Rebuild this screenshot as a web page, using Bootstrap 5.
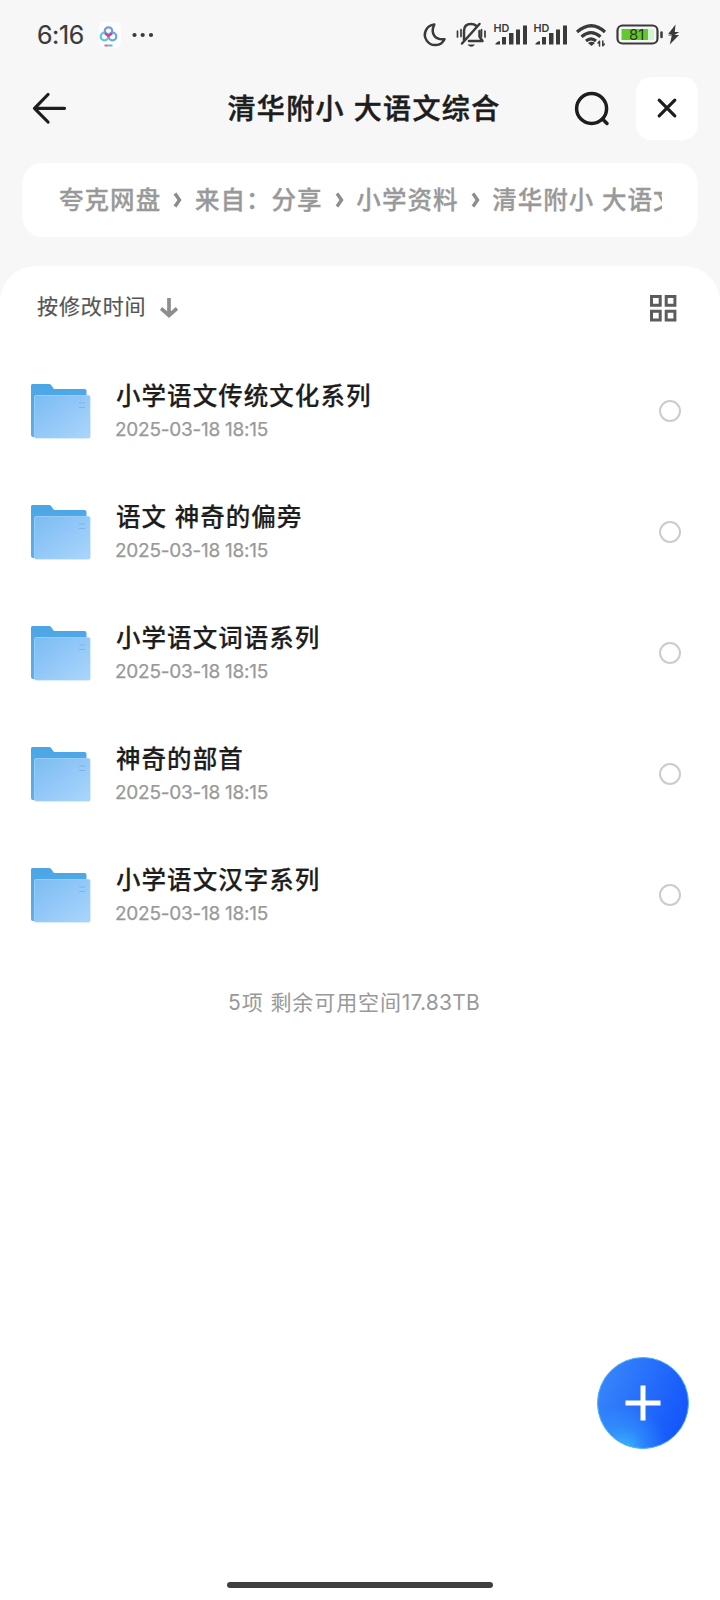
<!DOCTYPE html>
<html lang="zh-CN">
<head>
<meta charset="utf-8">
<meta name="viewport" content="width=device-width, initial-scale=1">
<title>清华附小 大语文综合</title>
<link href="https://cdn.jsdelivr.net/npm/bootstrap@5.3.0/dist/css/bootstrap.min.css" rel="stylesheet">
<style>
body{font-family:Inter,"Noto Sans CJK SC",sans-serif;background:#f7f7f7;color:#1d1d1d}
.screen{width:720px;height:1600px}
svg{display:block;flex:none}
.statusbar{height:70px;padding-left:37px}
.clock{font-size:25px;line-height:30px;color:#3a3a3a;width:46px;letter-spacing:-.4px;-webkit-text-stroke:.2px}
.titlebar{height:78px}
.page-name{font-size:28px;font-weight:500;letter-spacing:1.35px;line-height:40px;padding-left:86px;-webkit-text-stroke:.5px}
.close-btn{width:62px;height:63px;border-radius:15px;margin:-2px 22px 0 0}
.crumbs{height:74px;margin:15px 22px 0;padding:0 36px 0 37px;border-radius:21px}
.crumb-line{font-size:24.5px;font-weight:500;letter-spacing:1.05px;color:#999;line-height:36px;-webkit-text-stroke:.3px}
.sheet{margin-top:29px;border-radius:36px 36px 0 0}
.sortbar{height:84px;padding:0 43px 0 37px}
.sort-label{font-size:21px;letter-spacing:.9px;color:#555;line-height:32px;margin-top:-2px;-webkit-text-stroke:.2px}
.sort-arrow{margin-left:13px}
.entry{height:121px;padding:0 39px 0 28px}
.entry svg{margin-top:3px}
.entry-name{font-size:24.5px;font-weight:500;letter-spacing:1.05px;line-height:34px;margin-bottom:5px;-webkit-text-stroke:.2px}
.entry-date{font-size:19px;letter-spacing:-.25px;line-height:24px;color:#999;margin-left:-1px;-webkit-text-stroke:.25px}
.pick{width:22px;height:22px;border:2px solid #ccc;border-radius:50%}
.summary{font-size:21px;letter-spacing:.9px;color:#999;line-height:32px;padding-right:12px;margin-top:32px}
.summary b{font-weight:400;letter-spacing:.2px}
.fab{right:29px;bottom:149px;z-index:2}
.homebar{width:266px;height:6px;left:227px;bottom:12px;background:#404040}
</style>
</head>
<body>
<svg width="0" height="0" class="position-absolute">
<defs>
<linearGradient id="fback" x1="0" y1="0" x2="0" y2="1"><stop offset="0" stop-color="#4ba6e6"/><stop offset="1" stop-color="#5eaee8"/></linearGradient>
<linearGradient id="ffront" x1="0" y1="0" x2="1" y2="1"><stop offset="0" stop-color="#7bbcf2"/><stop offset=".5" stop-color="#93c8f8"/><stop offset="1" stop-color="#aad6fb"/></linearGradient>
<symbol id="folder" viewBox="0 0 64 58">
<path d="M3 2.500Q3 1 4.500 1H21q1.500 0 2.300 1.200L26 6h30.500q2 0 2 2v46H5q-2 0-2-2z" fill="url(#fback)"/>
<rect x="6.500" y="12.500" width="55.500" height="42.500" rx="1.500" fill="url(#ffront)" stroke="#a3d2f9" stroke-width=".8"/>
<path d="M51 20h6M51 24.500h6" stroke="#7bb5ea" stroke-width="1"/>
</symbol>
</defs>
</svg>
<main class="screen position-relative overflow-hidden d-flex flex-column">
  <header class="statusbar d-flex align-items-center">
    <span class="clock text-nowrap">6:16</span>
    <svg class="ms-3" width="22" height="26" viewBox="0 0 22 26"><rect width="22" height="26" rx="5" fill="#fff" opacity=".7"/><g fill="none" stroke-width="2.200"><circle cx="5.500" cy="14.500" r="3.800" stroke="#5bc6e3"/><circle cx="13.500" cy="14.500" r="3.800" stroke="#69a9df"/><circle cx="9.500" cy="9" r="3.700" stroke="#7999df"/><path d="M6 11.500 9.500 14l3.500-2.500" stroke="#dc3e89"/></g><path d="M5.500 23.500h4" stroke="#da659c" stroke-width="2"/><path d="M9.500 23.500h4" stroke="#55bbd8" stroke-width="2"/></svg>
    <svg class="ms-2" width="28" height="8" viewBox="0 0 28 8" fill="#3a3a3a"><circle cx="5.500" cy="4" r="2.100"/><circle cx="13.700" cy="4" r="2.100"/><circle cx="22" cy="4" r="2.100"/></svg>
    <svg class="ms-auto" width="310" height="50" viewBox="410 10 310 50" fill="none" stroke="#3a3a3a" stroke-width="2.500" stroke-linecap="round" stroke-linejoin="round">
      <path d="M434.300 24.500A10.300 10.300 0 1 0 444.500 39.200Q437.500 40 434.500 36Q431 31.500 434.300 24.500z"/>
      <path d="M464 40.500V31q0-7 7-7q3.200 0 4.800 1.500M479.500 31v5.500l3 4.500H469M462 43.500 479.500 24"/><path d="M467.500 44.500h7.500q-1.500 2.200-3.700 2.200t-3.800-2.200z" fill="#3a3a3a" stroke="none"/>
      <path d="M457.500 31v6M461 29.500v7M481.500 29.500v7M485 31v6" stroke-width="1.700"/>
      <g stroke="none" fill="#3a3a3a">
        <g id="sig"><path d="M495.500 44.500v-1q2-2.500 4.500-2.500v3.500zM502 37h4v7.500h-4zM509 33h4.500v11.500H509zM516 29.500h4v15h-4zM523 25.500h4v19h-4z"/><text x="493.500" y="31.800" font-family="Inter" font-weight="600" font-size="10.800">HD</text></g>
        <use href="#sig" x="40"/>
      </g>
      <g stroke-width="3.200" stroke-linecap="butt"><path d="M577 32q14.500-12.500 28 0M581.500 36.800q9.500-8.300 19 0M586 41q5-4.300 10 0"/></g>
      <path d="M588 43q3.500-2.500 7 0l-3.500 3z" fill="#3a3a3a" stroke="none"/>
      <path d="M599.500 46v-4.500M602.800 41v4.500M598 43l1.500-1.800M604.300 44l-1.500 1.800" stroke-width="1.500"/>
      <rect x="617.500" y="25.500" width="40" height="18" rx="5" stroke-width="2.200"/>
      <path d="M621.500 29h26.500v11h-26.500z" fill="#61c92f" stroke="none"/>
      <path d="M648 29h6v11h-6z" fill="#d8f1cf" stroke="none"/>
      <text x="629" y="40" fill="#2b3a22" stroke="none" font-family="Inter" font-weight="400" font-size="15">81</text>
      <path d="M661.500 32.500v4.500"/>
      <path d="M675.500 24.500 668 34.200h4.300L667.500 35.500h4.300L669.800 44.500 679 35h-4.500l4.800-3h-4.500z" fill="#3a3a3a" stroke="none"/>
    </svg>
  </header>
  <nav class="titlebar d-flex align-items-center">
    <svg width="80" height="60" viewBox="0 0 80 60" fill="none" stroke="#1d1d1d" stroke-width="3.200" stroke-linecap="round" stroke-linejoin="round"><path d="M64.500 29.300H35M48 15.500 34.500 29.300 48 43"/></svg>
    <h1 class="page-name mb-0 text-nowrap flex-grow-1 text-center">清华附小 大语文综合</h1>
    <svg width="74" height="60" viewBox="562 79 74 60" fill="none" stroke="#1d1d1d" stroke-width="3.500" stroke-linecap="round"><circle cx="591.600" cy="108.500" r="15"/><path d="m603 119.500 4 4"/></svg>
    <button class="close-btn btn bg-white border-0 p-0 d-flex align-items-center justify-content-center" aria-label="关闭"><svg width="24" height="24" viewBox="0 0 24 24" stroke="#1d1d1d" stroke-width="3.200" stroke-linecap="round"><path d="m4.200 4.200 15.600 15.600M19.800 4.200 4.200 19.800"/></svg></button>
  </nav>
  <div class="crumbs bg-white d-flex align-items-center">
    <div class="crumb-line d-flex text-nowrap overflow-hidden align-items-center w-100">
      <span>夸克网盘</span><svg width="33.700" height="16" viewBox="0 0 33.700 16" fill="none" stroke="#8c8c8c" stroke-width="3.400"><path d="m14 1.500 4.500 6.500-4.500 6.500"/></svg>
      <span>来自：分享</span><svg width="33.700" height="16" viewBox="0 0 33.700 16" fill="none" stroke="#8c8c8c" stroke-width="3.400"><path d="m14 1.500 4.500 6.500-4.500 6.500"/></svg>
      <span>小学资料</span><svg width="33.700" height="16" viewBox="0 0 33.700 16" fill="none" stroke="#8c8c8c" stroke-width="3.400"><path d="m14 1.500 4.500 6.500-4.500 6.500"/></svg>
      <span>清华附小 大语文综合</span>
    </div>
  </div>
  <section class="sheet bg-white flex-grow-1">
    <div class="sortbar d-flex align-items-center">
      <span class="sort-label">按修改时间</span>
      <svg class="sort-arrow" width="18" height="20" viewBox="0 0 18 20" fill="none" stroke="#8e8e8e" stroke-width="3.700"><path d="M9 0v18M1 10.500l8 7 8-7"/></svg>
      <svg class="ms-auto" width="28" height="28" viewBox="0 0 28 28" fill="none" stroke="#5c5c5c" stroke-width="3"><path d="M2.500 2.500h8.700v8.700H2.500zM17.200 2.500h8.700v8.700h-8.700zM2.500 17.200h8.700v8.700H2.500zM17.200 17.200h8.700v8.700h-8.700z"/></svg>
    </div>
    <div>
      <div class="entry d-flex align-items-center"><svg width="64" height="58"><use href="#folder"/></svg><div class="ms-4 flex-grow-1"><div class="entry-name">小学语文传统文化系列</div><div class="entry-date">2025-03-18 18:15</div></div><span class="pick"></span></div>
      <div class="entry d-flex align-items-center"><svg width="64" height="58"><use href="#folder"/></svg><div class="ms-4 flex-grow-1"><div class="entry-name">语文 神奇的偏旁</div><div class="entry-date">2025-03-18 18:15</div></div><span class="pick"></span></div>
      <div class="entry d-flex align-items-center"><svg width="64" height="58"><use href="#folder"/></svg><div class="ms-4 flex-grow-1"><div class="entry-name">小学语文词语系列</div><div class="entry-date">2025-03-18 18:15</div></div><span class="pick"></span></div>
      <div class="entry d-flex align-items-center"><svg width="64" height="58"><use href="#folder"/></svg><div class="ms-4 flex-grow-1"><div class="entry-name">神奇的部首</div><div class="entry-date">2025-03-18 18:15</div></div><span class="pick"></span></div>
      <div class="entry d-flex align-items-center"><svg width="64" height="58"><use href="#folder"/></svg><div class="ms-4 flex-grow-1"><div class="entry-name">小学语文汉字系列</div><div class="entry-date">2025-03-18 18:15</div></div><span class="pick"></span></div>
    </div>
    <p class="summary text-center mb-0">5项 剩余可用空间<b>17.83TB</b></p>
  </section>
  <button class="fab btn border-0 p-0 rounded-circle position-absolute" aria-label="新建">
    <svg width="96" height="96" viewBox="0 0 96 96"><defs><linearGradient id="fg" x1="0" y1=".2" x2="1" y2=".6"><stop offset="0" stop-color="#3888fa"/><stop offset="1" stop-color="#1455fb"/></linearGradient><radialGradient id="glow" cx=".28" cy="1.030" r=".5"><stop offset="0" stop-color="#3bc3fb"/><stop offset=".5" stop-color="#3bb0fb" stop-opacity=".4"/><stop offset="1" stop-color="#3bb0fb" stop-opacity="0"/></radialGradient></defs><circle cx="48" cy="48" r="45.500" fill="url(#fg)"/><circle cx="48" cy="48" r="45.500" fill="url(#glow)" stroke="#51b5fa" stroke-width="1"/><path d="M48 30.500v35M30.500 48h35" stroke="#fff" stroke-width="5"/></svg>
  </button>
  <div class="homebar position-absolute rounded-pill"></div>
</main>
<script src="https://cdn.jsdelivr.net/npm/bootstrap@5.3.0/dist/js/bootstrap.bundle.min.js"></script>
</body>
</html>
